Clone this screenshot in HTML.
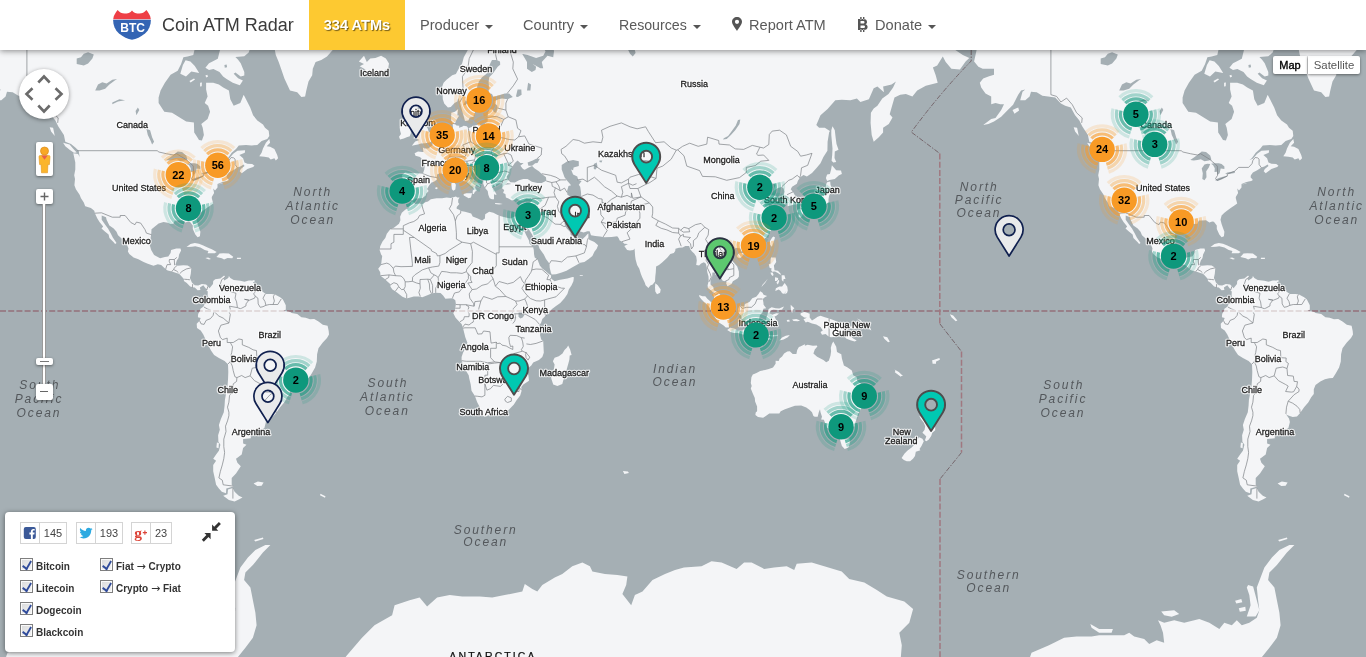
<!DOCTYPE html>
<html lang="en"><head><meta charset="utf-8"><title>Coin ATM Radar</title>
<style>
html,body{margin:0;padding:0;width:1366px;height:657px;overflow:hidden;background:#a5afb4;font-family:"Liberation Sans",sans-serif}
#map{position:absolute;left:0;top:0;width:1366px;height:657px;display:block}
.land{fill:#f4f5f7}
.water{fill:#a5afb4}
.border{fill:none;stroke:#7b8084;stroke-width:.7}
.dl{fill:none;stroke:#94707a;stroke-width:1.3;stroke-dasharray:6 2.2}
.cl{font:9px "Liberation Sans",sans-serif;letter-spacing:0;text-anchor:middle}
.halo{fill:#fff;stroke:#fff;stroke-width:2.6;stroke-linejoin:round;opacity:.8}
.ink{fill:#1c1c1c;stroke:#1c1c1c;stroke-width:.28}
.cn{font:bold 11px "Liberation Sans",sans-serif;fill:#000;text-anchor:middle}
.ol{font:italic 12px "Liberation Sans",sans-serif;fill:#54585c;letter-spacing:1.9px;text-anchor:middle}
#nav{position:absolute;left:0;top:0;width:1366px;height:50px;background:#fff;box-shadow:0 1px 6px rgba(0,0,0,.45);z-index:10}
#nav .brand{position:absolute;left:162px;top:0;line-height:51px;font-size:18px;color:#3b3b3b;white-space:nowrap}
#nav .cnt{position:absolute;left:309px;top:0;width:96px;height:50px;background:#fdc931;color:#fff;font-weight:bold;font-size:14.600px;line-height:50px;text-align:center;text-shadow:1px 1px 1px rgba(0,0,0,.55)}
#nav .it{position:absolute;top:0;line-height:50px;font-size:14.6px;color:#5a5a5a;white-space:nowrap}
.caret{display:inline-block;width:0;height:0;border-top:4px solid #555;border-left:4px solid transparent;border-right:4px solid transparent;vertical-align:middle;margin-left:6px;position:relative;top:1px}
.gm{position:absolute;background:#fff;box-shadow:0 1px 3px rgba(0,0,0,.45);border-radius:2px}
#panel{position:absolute;left:5px;top:512px;width:230px;height:140px;background:#fff;border-radius:4px;box-shadow:0 1px 5px rgba(0,0,0,.5);z-index:5}
#panel .sb{position:absolute;top:10px;height:22px;border:1px solid #d4d4d4;box-sizing:border-box;background:#fff}
#panel .sb i svg{margin-left:-1px}
#panel .sb i{font-style:normal;position:absolute;left:0;top:0;width:18px;height:20px;overflow:hidden;border-right:1px solid #d4d4d4;display:block}
#panel .sb span{position:absolute;left:19px;top:0;right:0;line-height:21px;text-align:center;font-size:11px;color:#444}
#panel .ck{position:absolute;width:13px;height:13px;border:1px solid #7f7f7f;background:linear-gradient(135deg,#d9dadb,#f4f4f4);box-sizing:border-box;box-shadow:inset 0 0 0 1px #fafafa}
#panel .ck:after{content:"";position:absolute;left:3.400px;top:-.5px;width:3.600px;height:8.200px;border:solid #2f4b9b;border-width:0 2.200px 2.200px 0;transform:rotate(38deg) skewX(8deg)}
#panel .ar{font:11px "DejaVu Sans",sans-serif;font-weight:normal;position:relative;top:-.5px}
#panel .lb{position:absolute;font-weight:bold;font-size:10px;color:#333;white-space:nowrap;line-height:12px}
</style></head><body>
<svg id="map" viewBox="0 0 1366 657" width="1366" height="657">
<defs><g id="world">
<path id="landp" class="land" d="M-49.9,61.4 -45.6,41.8 -35.6,32.3 -17.2,17.0 7.0,25.7 26.9,31.5 44.0,33.9 63.9,24.0 72.4,32.3 83.8,29.8 100.9,37.9 115.1,44.8 120.8,42.5 129.3,44.1 139.3,45.6 149.2,44.1 154.9,42.5 154.9,32.3 159.2,11.6 164.9,24.0 167.7,32.3 170.6,40.2 177.7,44.1 180.5,49.3 184.8,32.3 194.8,29.8 196.7,40.2 193.3,55.1 187.6,56.5 183.4,57.2 181.1,64.1 177.7,70.8 170.6,74.7 164.9,82.8 160.6,90.6 158.6,97.5 158.6,103.1 164.3,111.7 172.0,112.7 180.5,117.9 186.2,121.4 193.9,122.4 194.2,132.6 196.7,136.3 199.0,140.0 201.9,140.5 203.9,134.9 202.7,127.8 201.3,123.9 207.6,118.9 210.1,111.7 208.1,105.8 204.7,103.1 207.6,96.4 206.1,89.4 206.1,82.8 213.2,82.8 218.9,84.6 223.2,87.6 228.9,90.6 230.3,99.2 233.7,105.8 240.3,103.1 243.7,94.7 246.0,99.2 250.2,107.4 253.1,115.3 257.3,120.4 263.0,124.4 265.0,127.8 268.7,130.7 269.3,135.9 267.3,139.1 261.6,140.9 257.3,145.0 251.6,145.4 246.0,145.0 238.8,145.4 236.0,148.9 231.7,152.8 228.0,157.9 225.5,160.0 228.9,158.8 233.2,153.7 237.4,150.7 245.1,150.2 244.8,152.8 239.4,155.0 243.1,158.3 244.5,162.5 247.4,163.7 252.2,164.1 254.5,165.7 253.1,167.0 247.4,169.0 241.7,173.3 239.7,171.3 240.8,169.0 244.5,166.1 243.7,164.5 240.3,166.6 237.4,167.4 233.2,170.2 228.9,172.5 226.9,175.3 226.6,177.2 228.9,179.9 227.2,181.0 224.6,181.4 221.8,182.2 217.5,184.1 217.5,187.4 215.0,190.4 213.2,188.5 214.1,192.9 211.8,196.9 211.8,198.3 213.2,203.6 210.4,205.6 206.7,208.1 203.3,210.4 200.4,212.8 197.6,215.5 196.5,219.8 197.6,224.1 199.0,228.0 200.4,231.8 199.9,236.3 197.6,237.2 195.3,234.4 192.8,228.9 192.8,225.4 189.9,221.8 188.2,221.5 185.4,222.5 182.0,220.2 177.7,220.5 174.8,220.5 173.4,223.8 170.6,224.1 167.7,222.8 163.5,222.1 158.6,223.4 154.9,226.4 151.5,229.3 151.2,234.4 150.1,240.6 149.8,245.3 151.2,249.9 154.1,255.0 157.8,257.1 160.1,258.3 164.9,257.1 168.3,256.5 170.6,252.9 171.1,249.9 176.3,248.4 180.5,248.4 181.1,250.5 179.1,254.4 178.5,258.0 176.8,260.4 175.4,264.9 177.7,265.8 183.4,265.2 187.6,265.5 191.3,267.8 190.8,273.7 189.9,278.1 191.9,282.4 194.8,285.3 198.2,285.6 201.9,283.9 206.1,284.4 208.1,286.4 207.6,290.5 205.6,288.2 203.3,285.3 199.9,287.6 200.4,289.9 197.6,290.2 194.8,287.6 191.9,287.3 189.9,286.2 186.8,283.0 183.9,281.0 183.9,278.9 180.5,275.2 178.8,273.7 176.3,273.1 172.0,271.4 167.7,270.5 165.5,269.0 161.2,264.9 157.8,264.3 153.5,265.8 147.8,263.7 143.6,261.9 138.4,259.2 133.6,257.4 129.3,254.1 127.9,251.4 128.5,248.4 126.5,243.7 122.2,239.1 118.0,235.3 116.5,231.8 113.7,228.6 109.4,225.4 106.6,219.8 106.0,217.2 101.7,215.5 101.7,219.8 105.2,224.7 108.0,228.6 110.8,233.4 112.8,237.5 114.5,240.0 116.5,243.1 115.1,244.1 113.7,242.2 109.4,238.1 108.6,234.4 105.2,231.8 101.5,228.6 103.2,226.4 99.5,222.1 97.2,218.2 94.9,213.2 94.3,210.8 90.9,208.1 85.2,206.3 83.8,202.5 81.0,198.3 79.6,194.7 75.9,189.3 74.4,185.2 75.0,179.1 74.2,175.3 75.3,169.4 75.3,162.5 73.3,153.3 78.1,154.1 79.6,157.1 78.7,150.7 75.3,147.6 71.0,144.1 65.3,141.8 63.9,134.9 58.2,126.3 55.4,120.4 51.1,115.3 46.8,107.4 41.2,105.8 36.9,103.6 31.2,97.5 24.1,96.4 18.4,95.8 12.7,92.3 7.0,91.8 5.6,96.4 1.3,100.3 -3.8,100.3 -1.5,91.8 1.3,89.4 -2.9,90.6 -5.8,94.7 -8.6,100.3 -10.9,104.7 -17.2,111.1 -22.8,116.8 -30.0,121.4 -35.6,123.9 -40.8,124.9 -32.8,118.9 -28.5,117.9 -22.8,110.1 -20.0,104.2 -23.7,104.2 -28.5,103.1 -32.8,104.2 -32.8,96.4 -38.5,93.5 -42.8,87.6 -44.2,82.8 -40.8,78.5 -35.6,76.6 -30.0,74.7 -30.0,68.8 -35.6,68.8 -41.3,68.8 -45.6,66.8 -49.9,61.4Z M274.4,47.8 275.8,55.1 278.7,62.1 281.5,70.1 284.4,78.5 287.2,84.6 290.0,90.6 297.2,92.3 301.4,96.9 305.1,96.4 306.3,90.6 308.5,81.6 312.2,75.3 312.8,68.8 315.6,62.1 321.3,60.0 327.0,56.5 332.7,50.0 342.7,42.5 354.0,37.9 359.7,28.2 365.4,19.6 356.9,-19.4 314.2,-86.0 257.3,-86.0 228.9,-56.1 263.0,-25.0 271.6,28.2Z M259.3,156.2 261.6,152.8 263.0,148.5 265.9,142.7 269.3,139.1 270.1,142.7 266.7,146.3 270.1,146.7 274.4,148.9 275.8,152.0 277.2,155.0 278.1,158.3 275.8,160.4 274.4,158.3 270.7,159.6 268.7,157.5 264.4,156.7 259.3,156.2Z M63.1,142.7 69.6,144.5 73.0,148.5 76.7,152.4 73.9,152.8 69.6,149.8 65.3,146.3 63.1,142.7Z M186.5,247.1 190.5,244.1 194.8,243.1 199.0,243.7 203.3,245.6 207.6,247.4 211.8,249.3 216.7,252.0 214.7,253.2 207.6,253.2 208.4,251.1 204.7,249.9 200.4,247.4 195.3,246.2 191.9,246.8 186.5,247.1Z M216.4,257.1 219.5,253.5 223.2,253.2 228.9,253.5 233.2,256.8 232.3,258.3 227.5,258.0 224.1,259.5 221.8,258.3 216.4,257.1Z M205.3,258.0 208.1,257.4 211.0,258.9 209.0,259.5 205.3,258.0Z M236.9,257.7 241.1,257.7 240.8,258.9 236.9,258.9 236.9,257.7Z M358.9,61.4 364.0,55.8 366.8,62.1 370.3,58.6 375.4,57.9 381.1,55.8 385.9,58.6 389.0,63.5 388.2,68.2 383.9,70.8 376.8,75.3 371.1,74.7 364.0,72.7 365.4,69.5 359.7,66.2 364.0,64.1 358.9,61.4Z M49.7,127.3 53.1,127.8 54.8,135.9 51.1,131.6 49.7,127.3Z M-11.5,110.1 -5.8,107.4 -4.9,110.6 -9.5,113.8 -11.5,110.1Z M217.5,184.4 223.2,182.9 221.8,183.7 217.5,184.4Z M252.2,280.4 254.5,280.1 254.5,282.1 251.9,282.1 252.2,280.4Z M208.1,286.4 209.5,288.2 213.0,284.1 213.2,281.0 215.2,279.2 220.4,278.4 224.1,275.5 225.2,277.2 223.5,278.9 224.3,280.4 228.3,278.1 228.9,276.0 230.3,278.1 233.7,280.1 240.3,280.7 244.5,281.8 248.8,280.4 251.6,280.4 254.5,283.9 257.3,286.7 261.6,291.0 265.9,293.9 271.6,293.9 275.0,294.5 280.1,297.3 282.9,299.6 285.8,305.3 285.8,309.6 282.9,311.0 285.8,311.6 290.0,311.9 291.5,313.0 297.2,314.1 301.4,317.3 305.7,317.8 310.0,319.3 314.2,319.0 318.5,321.5 322.8,324.7 327.6,325.8 328.7,331.0 329.0,334.4 327.0,338.1 322.8,342.5 318.5,348.3 317.1,354.2 316.8,361.6 315.1,367.6 311.7,373.6 308.8,377.9 305.1,378.3 300.9,379.2 296.3,381.4 291.5,385.1 289.8,389.2 289.8,394.0 287.2,397.3 284.4,402.2 280.1,407.2 276.1,412.9 273.0,416.4 268.7,417.0 263.6,415.3 261.9,413.9 265.0,418.4 265.9,421.9 264.4,428.0 260.2,430.6 251.6,431.3 250.8,435.3 250.8,438.3 243.1,439.1 243.1,443.6 246.5,444.8 243.1,447.9 241.7,454.6 236.0,458.7 237.4,462.8 240.8,466.2 236.0,473.5 231.7,477.9 231.7,484.8 233.4,486.6 226.3,488.5 226.0,493.2 221.8,491.8 218.9,488.5 216.1,484.8 214.7,477.9 213.2,471.3 213.2,464.9 216.1,460.8 213.2,458.7 216.1,454.6 218.9,450.7 220.4,444.8 218.4,441.7 218.1,435.3 219.8,429.8 218.9,425.1 220.9,419.1 223.8,412.2 224.6,405.5 224.9,399.9 226.0,394.0 227.5,386.1 228.0,379.8 228.3,372.1 228.0,364.3 224.6,361.0 218.9,358.0 214.1,355.0 211.0,350.6 208.4,345.4 205.6,339.6 203.3,334.4 200.7,330.4 197.0,328.1 196.7,323.8 199.6,320.7 200.7,318.1 197.9,317.3 198.2,313.8 200.2,311.0 200.4,308.7 203.3,306.7 204.7,303.9 207.6,303.6 208.4,300.2 207.6,295.3 207.8,291.6 206.4,290.5Z M232.9,488.0 228.0,489.4 227.5,494.2 223.2,495.7 228.9,500.1 234.6,501.6 238.8,499.6 242.5,497.6 238.8,495.7 234.6,491.8 232.9,488.0Z M253.6,483.4 257.9,481.5 263.6,482.5 261.6,485.7 257.3,486.1 253.6,483.4Z M216.9,442.5 218.9,442.9 218.6,448.3 216.4,447.5 216.9,442.5Z M411.2,201.8 412.9,201.5 415.2,203.9 419.5,203.6 422.3,204.3 425.2,202.2 428.0,201.5 430.8,199.3 436.5,198.3 442.2,198.3 446.5,197.6 450.8,197.9 455.9,196.5 457.3,197.6 459.6,197.6 458.2,199.7 458.2,202.5 459.3,203.9 456.7,207.0 456.7,208.7 459.3,209.8 460.7,211.1 465.0,211.8 471.2,213.5 472.7,216.5 477.8,218.5 482.0,220.5 484.9,218.5 485.2,214.2 489.2,211.8 493.4,212.8 499.1,215.8 504.8,217.2 510.5,218.5 514.8,216.5 519.9,217.2 522.4,217.8 525.6,217.2 527.3,223.1 525.8,227.3 525.3,228.9 523.3,226.4 520.7,221.8 521.6,226.4 524.1,230.5 526.1,235.0 529.0,240.6 529.5,243.7 533.0,246.8 533.8,249.9 534.1,254.4 534.7,257.4 537.5,259.5 539.8,265.5 542.3,268.4 546.0,271.4 548.9,274.0 551.2,275.5 550.9,277.8 551.7,278.9 554.6,281.3 558.8,280.1 563.1,279.2 567.4,278.6 572.5,276.9 573.9,277.2 573.4,281.3 571.6,285.3 568.8,289.6 567.4,293.9 564.5,298.2 560.3,303.0 556.0,305.9 551.7,309.3 547.5,313.3 544.6,316.7 542.3,319.0 541.2,322.4 539.5,325.2 538.4,328.7 540.1,331.0 540.1,335.3 541.2,339.6 543.2,341.0 543.5,346.8 543.8,352.7 542.3,357.1 538.9,360.1 533.2,362.5 531.3,365.5 527.6,368.5 526.7,370.6 528.4,375.2 529.0,380.7 523.3,384.5 521.3,387.0 521.6,390.8 520.2,395.6 516.7,399.9 513.9,404.5 509.1,409.5 504.8,412.9 501.1,413.9 494.8,413.9 490.6,414.6 484.9,416.7 480.6,415.0 480.1,411.2 479.8,407.2 477.2,402.2 474.9,396.0 471.5,390.8 470.7,384.5 469.2,378.3 468.7,375.2 465.8,370.6 463.0,364.6 461.6,360.7 461.6,357.1 463.0,352.7 466.4,346.8 467.3,342.5 465.3,337.3 463.0,328.1 462.7,327.2 461.6,324.1 459.3,321.8 455.6,317.8 453.3,313.3 455.0,310.4 455.3,307.9 455.9,303.9 455.3,300.2 452.7,298.2 448.5,298.5 445.4,298.8 443.1,295.6 440.5,293.0 435.7,292.8 431.4,293.6 428.0,295.0 422.3,297.3 418.9,296.5 413.8,296.5 406.7,298.5 402.4,296.8 397.3,292.8 395.3,291.3 392.4,289.6 390.5,286.7 390.2,283.9 386.8,281.0 385.3,279.5 380.5,275.7 380.2,272.2 378.2,268.7 381.1,264.9 381.6,260.4 382.2,255.9 381.1,254.4 379.6,249.9 380.2,246.2 382.5,241.6 385.3,238.1 386.8,233.7 390.5,228.9 393.9,227.7 399.0,223.8 400.4,220.2 400.1,216.8 401.8,212.8 405.2,209.8 408.7,207.7 410.9,203.6 411.2,201.8Z M568.2,345.4 570.2,349.8 571.6,355.0 569.7,355.6 569.4,359.5 568.5,363.1 566.8,369.1 564.5,375.8 562.3,383.9 557.4,386.1 553.2,384.5 551.2,378.3 551.2,374.6 554.0,369.1 554.6,364.6 552.9,361.3 554.6,357.7 558.8,356.2 562.5,353.6 564.5,350.1 566.8,347.7 568.2,345.4Z M833.3,341.6 836.2,346.8 837.0,352.1 841.3,354.2 841.9,358.6 843.9,365.5 847.6,367.6 851.8,370.6 853.2,375.2 856.9,377.6 857.2,380.7 861.8,384.5 863.8,387.6 864.6,394.7 863.2,400.5 862.9,405.5 860.4,409.9 858.1,413.9 856.7,418.4 854.7,424.4 854.4,426.6 849.0,427.7 844.4,432.0 840.4,429.5 839.0,428.7 836.2,430.9 830.5,429.5 827.1,427.7 825.4,423.7 823.9,419.8 821.1,419.5 822.0,416.7 820.5,412.2 820.0,409.2 818.8,412.2 817.7,416.7 814.8,416.7 813.4,416.0 812.0,412.2 809.7,409.9 806.3,407.5 801.2,405.5 794.9,405.8 789.2,407.8 785.0,409.2 780.7,411.2 779.3,413.6 775.0,413.6 769.3,413.6 765.1,416.4 763.1,417.7 758.0,417.0 755.4,415.0 755.7,412.6 757.1,411.2 757.1,406.5 755.1,401.5 754.8,397.9 752.8,393.4 750.8,388.6 751.7,386.1 750.8,382.9 751.4,377.3 752.8,374.6 756.5,373.0 760.2,370.9 765.1,370.0 768.8,369.1 773.0,367.6 775.6,363.7 775.6,360.7 778.7,361.0 779.6,358.6 782.1,356.5 784.1,353.6 787.3,351.5 789.8,351.2 792.7,353.9 796.4,353.9 797.2,350.1 798.9,347.1 800.3,346.5 804.9,344.2 804.9,345.7 807.7,344.8 812.9,345.7 816.8,345.4 817.4,346.5 814.8,349.5 813.4,353.6 817.1,356.8 823.4,360.1 826.2,362.2 828.8,360.7 830.5,355.6 831.1,351.2 830.8,347.7 831.9,343.9 833.3,341.6Z M839.6,437.9 844.7,439.5 849.5,438.3 849.8,443.6 848.4,447.5 844.7,449.1 841.9,446.0 840.7,442.1 839.6,437.9Z M919.2,415.7 922.4,418.1 924.6,421.6 926.6,423.7 928.1,423.4 928.6,426.6 932.0,428.0 935.2,426.9 935.2,430.2 932.3,432.7 931.2,436.1 928.6,439.8 926.3,441.3 924.9,440.2 926.3,436.5 924.4,434.6 922.4,432.7 924.6,429.8 925.2,426.2 923.8,422.7 920.9,419.1 919.2,415.7Z M919.2,437.2 922.4,438.7 923.8,441.3 921.5,446.0 919.5,449.1 920.4,450.3 915.8,451.8 915.0,455.9 913.0,458.7 910.1,461.2 906.7,461.2 903.9,459.9 901.6,457.9 904.4,453.8 907.3,450.7 911.6,447.5 915.0,444.0 917.2,439.8 919.2,437.2Z M501.1,18.8 507.6,19.6 516.2,25.7 521.9,33.1 530.4,34.7 541.8,44.1 545.5,51.5 543.2,55.8 536.1,57.9 527.6,55.1 521.9,53.7 520.4,50.8 523.3,55.8 527.0,62.1 527.0,68.8 531.8,72.1 535.5,70.1 536.1,66.8 532.7,64.1 540.4,68.2 543.2,68.2 541.8,62.1 547.5,55.8 553.2,57.2 554.0,51.5 552.6,40.2 558.8,44.1 570.2,42.5 581.6,41.8 590.1,39.4 598.7,32.3 610.0,33.9 618.6,37.9 624.3,40.2 627.1,47.8 630.0,53.7 632.8,56.5 635.6,52.9 634.2,47.8 634.2,36.3 635.6,19.6 655.6,6.0 698.2,-30.8 740.9,-8.8 789.2,1.2 826.2,6.0 854.7,15.2 883.1,28.2 911.6,32.3 940.0,36.3 954.2,49.3 962.8,55.1 969.3,57.9 965.6,61.4 959.9,69.5 951.4,68.8 945.7,62.1 942.8,56.5 937.2,65.5 932.9,67.5 935.7,75.3 937.7,82.8 925.8,85.8 917.2,90.6 912.4,96.4 905.9,94.1 900.2,94.7 894.5,97.5 891.6,107.4 889.7,114.3 892.5,117.4 888.8,123.9 883.1,127.8 883.1,132.6 878.8,137.2 873.7,141.8 871.7,134.9 870.6,122.9 870.9,112.7 873.7,108.5 877.4,105.8 882.3,98.6 888.5,94.1 893.1,87.6 895.9,81.6 891.6,84.6 883.1,86.4 884.0,92.3 877.4,86.4 873.7,88.2 868.9,99.2 860.4,102.0 856.9,98.6 850.4,100.3 841.9,99.8 835.3,100.3 827.6,109.0 820.5,115.3 816.3,124.9 819.1,127.8 824.8,127.8 829.9,131.1 829.1,132.6 827.6,141.8 827.4,150.7 823.4,157.1 820.5,163.3 816.3,168.2 812.0,172.9 806.9,176.4 803.5,174.9 800.1,177.2 797.8,181.0 796.9,183.7 792.1,186.7 790.7,189.3 793.2,192.2 796.1,197.6 796.4,202.9 794.9,204.3 790.7,205.6 787.5,206.3 787.8,201.8 788.4,197.6 783.6,194.7 784.4,191.8 783.6,188.5 781.8,187.0 777.9,188.1 773.6,191.1 774.2,188.5 775.6,184.8 772.2,183.3 767.9,187.4 763.6,189.6 762.8,192.2 766.2,195.8 767.9,197.2 771.6,194.7 776.4,196.1 776.2,197.9 771.3,200.1 767.3,204.3 770.2,207.0 771.9,212.1 774.5,215.2 774.7,218.2 772.2,220.5 775.0,221.5 773.9,226.4 771.6,228.9 768.8,233.7 766.5,236.9 763.6,239.4 760.2,242.8 755.1,244.7 752.8,245.9 749.4,246.8 746.0,248.1 742.3,249.3 741.7,252.0 740.3,248.4 736.6,247.7 732.4,249.9 731.2,252.3 728.9,255.3 730.9,259.5 734.1,263.1 737.2,266.4 738.9,271.4 738.9,276.6 737.5,278.6 732.9,281.3 731.5,283.9 727.5,286.2 726.1,283.3 726.7,281.5 722.7,280.7 721.0,278.1 719.0,276.0 715.3,274.6 715.0,272.5 712.4,272.5 712.2,276.6 710.5,280.1 710.5,284.4 713.3,287.0 713.9,290.2 717.3,291.9 719.0,293.3 722.1,297.3 722.4,302.5 724.4,306.7 723.3,307.3 719.6,305.0 716.4,302.7 714.4,299.6 713.6,295.3 713.0,292.5 711.0,290.2 707.9,287.9 707.6,285.3 708.7,281.0 708.5,276.6 707.3,272.2 706.8,267.8 705.9,263.7 703.9,262.2 701.1,263.4 699.1,265.5 696.2,264.9 696.8,260.4 696.2,256.5 694.2,253.5 692.0,251.4 690.3,249.3 689.1,245.9 685.4,245.9 682.6,247.4 678.9,247.7 675.5,248.7 675.2,251.1 673.8,252.9 670.3,254.1 667.2,257.7 662.1,262.5 659.0,264.9 656.1,266.4 655.8,272.2 655.3,276.6 655.0,281.5 652.7,284.4 650.4,285.6 648.4,287.9 645.6,285.3 644.7,282.4 642.2,277.2 640.8,273.7 639.3,268.7 637.1,264.9 635.6,259.5 635.1,255.9 634.8,251.4 634.5,248.4 633.4,249.9 630.0,250.5 627.1,249.9 624.3,245.9 628.0,244.1 624.3,243.7 622.0,241.6 619.7,240.6 618.6,238.1 617.2,236.3 611.5,236.9 604.4,237.2 600.1,236.6 595.3,235.9 591.0,235.3 589.6,231.2 587.3,231.2 583.6,232.5 579.6,231.2 574.5,228.3 572.5,224.7 570.2,220.8 567.4,220.2 566.0,221.5 564.5,223.1 565.1,225.4 566.8,228.6 570.2,232.1 570.8,235.3 572.5,235.9 573.6,234.1 574.8,237.5 574.2,239.4 577.3,240.0 581.6,240.0 585.3,236.6 587.6,234.1 588.4,233.4 588.4,237.5 589.3,239.7 594.4,241.9 598.1,245.3 596.7,248.7 594.4,251.7 592.4,255.9 588.7,258.9 584.4,261.9 580.2,262.8 576.5,264.9 571.6,267.8 566.5,270.8 561.7,272.5 556.0,274.3 551.7,274.6 550.9,272.8 549.7,267.8 549.5,263.7 546.0,258.9 543.8,254.4 539.5,248.4 537.5,242.2 534.1,239.1 532.1,234.4 529.0,229.6 527.0,228.0 527.6,223.1 525.6,217.2 526.1,216.5 527.3,213.2 527.8,210.8 529.8,206.3 530.4,201.8 531.0,198.3 529.0,199.0 526.1,198.6 523.3,200.8 520.4,200.8 516.2,198.3 514.8,199.7 511.9,200.4 508.5,198.6 505.9,197.6 505.4,194.0 503.1,192.9 504.2,190.0 502.2,188.5 502.5,186.3 502.5,184.4 502.0,183.3 499.1,183.3 496.3,184.1 495.7,186.7 493.1,184.8 492.3,187.4 494.3,190.4 496.3,194.0 496.3,195.1 494.0,194.3 494.0,199.3 492.0,199.3 489.7,198.3 488.3,194.7 487.7,191.1 484.9,187.8 483.2,183.7 483.5,179.9 480.6,177.2 477.2,174.9 473.2,172.5 470.7,168.6 468.7,166.1 466.7,167.4 467.0,164.5 463.3,165.7 463.0,169.0 463.8,171.3 466.7,173.3 468.4,177.2 471.2,179.5 474.1,179.5 473.5,181.4 476.4,182.5 479.2,184.4 480.6,186.3 479.5,187.0 476.6,184.8 475.2,186.3 475.2,188.1 476.9,190.4 474.9,191.8 473.8,194.0 472.7,194.0 472.7,190.7 474.1,189.3 472.7,186.7 470.7,185.5 469.0,184.1 467.0,182.2 463.6,180.7 461.0,177.6 457.9,175.7 457.3,172.9 455.9,171.0 453.3,169.8 451.0,171.7 449.3,172.1 446.8,174.5 443.1,174.1 439.7,173.3 437.1,174.5 436.8,177.6 437.1,179.5 434.3,181.4 430.6,182.9 428.6,186.3 427.1,188.9 428.6,191.1 426.3,193.6 425.7,195.4 422.6,197.9 420.9,198.3 415.5,198.6 412.9,200.8 410.4,199.3 409.8,197.9 407.0,196.9 402.7,197.6 403.0,192.5 401.3,191.1 402.7,185.9 403.3,182.2 402.7,178.4 401.8,174.9 405.2,172.5 408.1,172.9 412.4,172.9 417.2,173.3 422.9,173.7 424.3,169.4 424.9,164.9 424.6,162.5 421.7,158.8 420.0,157.1 415.5,155.8 414.6,153.3 418.0,151.5 422.3,152.0 423.4,152.0 422.9,147.6 424.6,148.5 428.3,148.5 432.3,145.4 432.8,142.3 435.1,141.4 438.0,139.5 439.9,136.3 441.7,132.6 443.6,131.1 447.9,130.2 451.3,129.7 453.0,127.8 452.5,122.9 451.0,119.9 451.3,112.7 455.0,111.7 458.2,109.0 457.6,112.7 457.3,115.3 459.0,115.8 457.0,118.9 455.6,121.4 455.3,123.9 456.4,125.4 459.3,125.8 459.0,127.8 462.1,126.8 463.6,125.8 466.7,126.3 468.4,128.3 473.5,126.3 479.2,123.9 480.9,125.8 484.0,125.8 484.9,123.4 487.7,121.4 487.7,116.8 488.0,112.7 489.7,109.6 492.3,109.0 494.0,112.2 496.3,112.7 497.4,108.0 497.4,105.8 494.8,103.6 494.8,100.9 498.5,99.2 502.0,98.6 507.6,99.2 512.8,96.9 509.1,93.5 504.8,93.5 499.1,95.2 493.4,96.9 492.0,94.1 488.6,92.9 488.9,85.2 488.6,82.2 489.2,77.2 492.9,73.4 497.7,66.8 500.2,64.8 500.0,61.4 496.8,60.0 492.0,60.0 490.6,62.8 488.6,67.5 489.2,70.1 486.3,74.0 482.0,77.2 478.9,81.6 477.2,86.4 476.9,92.3 480.6,95.8 481.8,97.5 479.8,100.3 477.8,103.6 475.5,107.4 474.9,112.7 473.5,116.8 469.8,117.4 468.4,120.4 465.0,120.9 464.1,117.4 462.7,112.7 461.3,107.4 459.9,102.0 458.2,98.1 457.3,101.4 454.5,103.1 450.8,106.9 447.9,107.4 444.2,103.6 442.8,99.2 442.5,93.5 442.2,86.4 443.6,82.8 446.5,79.7 452.2,75.3 455.9,74.0 458.7,68.8 462.1,63.5 463.8,57.2 467.8,50.0 470.7,44.1 476.4,36.3 482.0,29.8 490.6,24.0 501.1,18.8Z M413.2,104.2 419.5,104.2 416.9,109.0 422.3,109.0 422.9,110.6 420.9,115.8 418.9,117.9 422.3,118.9 423.7,122.9 425.2,125.4 427.4,127.8 428.9,132.1 432.6,133.5 432.8,135.9 430.8,138.2 432.0,140.5 430.3,142.3 425.2,143.2 420.9,143.6 418.0,144.5 415.2,145.0 411.8,145.8 415.2,141.4 419.5,140.0 417.2,139.1 413.2,138.2 415.8,134.9 416.1,132.6 414.9,130.7 419.2,130.7 419.5,127.8 418.0,125.4 418.3,123.4 414.1,123.9 414.3,118.9 411.8,120.9 412.4,115.3 410.4,112.7 411.8,109.0 413.2,104.2Z M407.0,121.4 410.4,121.9 412.4,124.9 410.6,128.8 410.9,133.0 409.8,136.3 406.7,137.2 403.8,138.6 400.1,139.5 399.0,136.8 401.0,134.0 400.1,130.7 399.6,126.8 403.8,125.4 404.4,122.4 407.0,121.4Z M463.6,194.0 466.4,193.3 472.1,193.3 471.0,197.6 468.7,198.3 463.8,195.4 463.6,194.0Z M451.3,183.3 454.2,182.2 455.9,184.8 455.3,189.6 453.3,190.7 451.9,189.3 451.3,183.3Z M452.5,177.6 454.7,175.3 455.0,179.1 454.2,181.4 452.7,180.3 452.5,177.6Z M495.1,202.9 499.1,203.2 502.8,203.9 499.1,204.6 495.1,203.9 495.1,202.9Z M519.9,204.6 521.9,203.6 526.1,202.5 524.4,204.6 521.9,206.0 519.9,204.6Z M434.8,188.1 437.1,187.0 437.7,188.5 436.2,189.3 434.8,188.1Z M655.3,283.3 657.8,285.3 660.7,289.6 660.1,292.8 657.0,294.2 655.3,291.6 655.0,287.6 655.3,283.3Z M830.2,181.4 830.5,184.8 831.9,188.5 830.5,192.9 829.1,195.8 828.5,199.3 828.5,202.2 826.2,204.3 825.7,202.9 823.9,203.9 822.8,205.6 820.0,205.6 817.7,206.0 817.1,207.0 814.8,209.8 812.6,208.4 812.9,206.0 810.0,206.0 806.3,207.0 804.0,208.4 800.6,208.1 800.6,206.3 804.9,203.2 809.2,202.5 813.4,202.2 814.8,200.1 817.1,197.9 818.5,195.8 822.0,196.1 824.8,192.9 826.2,188.5 825.9,184.8 827.1,182.2 830.2,181.4Z M827.1,181.0 829.6,179.9 834.8,179.1 839.0,175.3 841.9,174.1 841.0,170.6 836.2,170.2 831.9,165.3 831.1,169.4 829.9,174.1 827.1,174.5 825.9,178.0 827.1,181.0Z M800.3,208.4 802.6,209.8 803.2,212.5 801.8,216.5 799.8,217.8 798.3,216.5 799.2,213.2 797.2,212.1 797.2,209.8 800.3,208.4Z M804.9,209.1 809.7,207.0 811.1,208.7 809.7,210.4 806.9,211.5 804.9,209.1Z M832.5,126.3 834.8,130.2 835.6,137.2 836.5,144.1 838.5,149.8 834.8,151.5 834.5,157.9 836.2,162.1 833.3,162.5 831.6,160.8 832.2,155.0 832.5,148.5 831.9,141.8 831.3,134.9 831.3,130.2 832.5,126.3Z M773.6,236.6 775.0,237.5 773.6,242.2 771.9,246.8 769.9,244.7 769.9,241.3 772.2,237.5 773.6,236.6Z M737.2,255.3 739.5,252.9 743.2,252.9 743.7,254.1 741.7,257.1 739.5,258.3 737.2,257.1 737.2,255.3Z M771.0,257.4 775.6,257.4 776.2,261.9 773.9,265.5 774.5,270.2 777.9,270.8 780.7,273.7 780.7,274.9 777.9,273.1 775.0,271.4 772.2,271.7 771.0,269.9 771.9,268.7 769.6,267.8 768.8,264.3 770.5,263.4 770.5,260.4 771.0,257.4Z M784.7,283.0 787.3,286.7 787.8,290.5 787.0,293.0 785.0,293.9 785.5,291.0 784.4,293.9 782.1,293.3 780.7,291.0 778.7,289.6 775.3,291.0 775.9,288.2 779.3,286.4 782.1,286.4 784.7,283.0Z M775.0,277.2 778.2,278.1 777.9,280.1 776.4,281.0 775.0,281.0 775.0,277.2Z M781.6,275.2 784.4,275.2 785.5,278.9 783.6,278.9 783.3,281.8 781.8,280.1 781.6,275.2Z M778.4,279.8 779.3,281.0 777.9,284.4 776.4,282.7 778.4,279.8Z M767.9,278.6 765.1,283.0 761.4,287.0 762.5,284.7 765.9,281.0 767.9,278.6Z M770.5,272.5 772.7,272.5 773.6,274.9 772.5,276.0 771.0,274.3 770.5,272.5Z M739.8,305.3 741.7,306.2 744.3,306.7 744.9,303.9 749.4,301.9 752.3,298.2 756.2,296.8 758.5,293.9 760.2,291.3 762.5,292.8 763.6,294.8 767.1,295.9 764.8,297.3 762.8,299.0 763.4,302.5 763.6,304.7 766.2,308.2 763.4,308.7 762.2,312.7 759.9,315.3 759.1,319.0 758.0,321.5 754.3,322.7 750.8,320.4 746.6,320.7 741.7,319.3 740.9,315.3 738.3,312.4 738.0,309.0 739.8,305.3Z M699.1,295.0 702.5,296.2 705.3,296.2 707.3,298.8 711.0,301.9 713.9,304.7 716.7,306.2 720.4,308.7 723.0,311.0 723.3,313.8 725.2,316.4 729.5,319.5 729.2,323.8 728.9,327.5 725.8,327.5 723.3,325.2 719.0,322.4 715.9,318.7 713.9,315.3 711.9,311.6 709.3,307.3 707.3,304.7 704.5,302.5 701.6,299.6 699.4,296.8 699.1,295.0Z M727.2,330.1 730.1,327.8 734.6,328.7 737.5,330.4 742.3,330.7 743.7,329.2 748.3,330.7 749.4,332.7 753.7,333.0 753.7,335.8 749.4,334.7 743.7,334.7 738.0,333.0 733.8,333.0 730.4,332.1 727.2,330.1Z M768.8,309.0 771.6,307.3 775.6,308.2 779.3,308.4 782.1,307.3 784.1,306.4 782.1,309.6 778.7,309.9 773.6,309.6 770.2,310.4 769.3,313.3 772.2,314.7 776.4,313.3 779.0,313.6 776.4,315.8 774.5,316.4 776.2,320.1 778.4,323.0 777.0,324.1 775.3,324.4 773.9,322.7 772.2,319.0 770.8,319.3 770.5,321.8 770.8,326.7 767.9,326.7 767.9,322.4 766.2,320.4 766.2,318.1 767.3,315.3 768.8,309.0Z M800.6,313.3 804.3,312.1 807.7,313.0 809.7,313.8 809.7,317.5 812.0,320.4 814.8,318.7 817.7,316.7 820.5,315.8 824.8,317.3 829.1,318.4 833.3,320.1 837.6,321.8 840.4,323.8 842.7,326.1 846.1,327.8 848.4,329.8 846.7,331.0 847.6,333.3 850.4,336.1 853.2,338.4 856.7,340.5 854.7,341.6 850.4,340.2 846.1,338.4 843.3,334.4 839.9,333.0 837.0,334.1 835.3,336.7 831.9,337.3 829.1,337.0 825.7,334.1 822.0,334.7 820.5,332.1 822.8,330.4 820.5,327.0 816.3,324.4 812.0,323.5 807.7,321.8 805.7,322.4 803.5,319.3 806.9,317.8 804.3,317.5 800.6,315.0 800.6,313.3Z M779.3,340.5 782.1,337.6 785.8,335.8 789.8,335.0 787.8,337.3 783.6,339.6 779.3,340.5Z M769.0,335.3 773.6,335.3 777.9,334.7 777.3,336.1 772.2,336.4 769.0,336.1 769.0,335.3Z M760.2,335.0 763.6,334.4 766.5,335.3 765.1,336.4 760.8,336.7 760.2,335.0Z M754.0,334.4 756.8,334.4 759.7,334.7 759.4,336.4 756.5,336.1 754.0,335.0 754.0,334.4Z M766.5,338.1 770.2,338.1 771.6,340.2 768.2,339.6 766.5,338.1Z M790.7,304.7 792.7,306.7 794.4,308.2 792.9,309.6 792.1,313.0 791.0,310.1 790.7,307.6 790.7,304.7Z M792.1,319.5 796.4,319.0 800.1,320.4 797.8,321.2 793.5,321.0 792.1,319.5Z M786.7,320.1 789.2,319.8 789.8,321.5 787.3,321.8 786.7,320.1Z M849.8,327.0 854.7,325.2 858.9,323.0 861.2,323.2 860.4,326.1 856.1,328.7 851.8,328.7 849.8,327.0Z M856.9,318.4 860.4,320.1 863.2,323.2 862.3,323.5 858.9,320.1 856.9,318.4Z M867.8,326.1 870.3,328.1 871.4,330.4 869.5,329.5 867.8,326.1Z M894.5,369.4 898.8,372.1 903.0,376.1 901.0,376.1 897.3,373.6 894.5,369.4Z M932.3,361.6 936.0,361.6 936.0,363.7 932.6,363.7 932.3,361.6Z M579.6,274.9 583.0,274.9 582.5,275.7 579.9,275.7 579.6,274.9Z M5.0,660.2 7.5,652.7 25.0,645.2 40.1,637.7 52.6,636.5 67.6,636.5 75.1,635.2 87.6,635.2 100.2,635.2 105.2,632.7 110.2,636.5 120.2,639.0 125.2,644.0 132.7,640.2 140.2,642.7 139.0,632.7 136.5,625.2 134.0,620.2 140.2,622.7 150.2,620.2 160.2,622.7 175.3,618.9 185.3,622.7 195.3,628.9 200.3,622.7 207.8,625.2 212.8,620.2 217.8,625.2 225.3,622.7 232.8,617.7 235.4,610.2 234.1,600.2 232.8,587.6 236.6,577.6 240.4,567.6 247.9,557.6 255.4,550.1 265.4,545.1 270.4,545.1 262.9,552.6 252.9,565.1 245.4,572.6 244.1,580.1 250.4,587.6 252.9,600.2 255.4,612.7 256.6,625.2 252.9,637.7 245.4,647.7 235.4,660.2 225.3,675.3 332.0,675.3 347.0,655.2 362.0,637.7 374.5,625.2 392.1,615.2 394.6,605.2 402.1,602.7 409.6,600.2 419.6,597.6 427.1,606.4 437.1,597.6 449.7,595.1 462.2,596.4 479.7,596.4 492.2,597.6 504.7,595.1 522.3,591.4 524.8,583.9 532.3,588.9 537.3,591.4 542.3,585.1 554.8,577.6 562.3,573.9 572.3,566.3 582.4,562.6 589.9,566.3 592.4,571.4 604.9,573.9 617.4,575.1 627.4,576.4 626.2,585.1 622.4,593.9 631.2,605.2 634.9,595.1 642.5,591.4 652.5,580.1 665.0,573.9 675.0,570.1 684.0,567.6 684.0,567.6 701.5,566.3 711.5,561.3 721.6,562.6 736.6,568.9 744.1,562.6 751.6,562.6 764.1,568.9 774.1,567.6 786.7,566.3 794.2,570.1 796.7,563.8 811.7,562.6 824.2,566.3 841.7,571.4 849.2,578.9 864.3,582.6 876.8,590.1 886.8,596.4 904.3,601.4 913.1,608.9 909.3,622.7 899.3,632.7 901.8,645.2 900.6,660.2 896.8,675.3 L1029.0,660.2 L1029.0,720 L5.0,720 Z M224.1,585.1 229.1,586.4 232.8,600.2 235.4,610.2 231.6,616.4 222.8,616.4 226.6,605.2 225.3,595.1 222.8,587.6Z M211.1,600.7 217.3,599.1 218.3,602.2 212.3,603.4Z M214.8,608.2 221.3,606.7 221.8,610.7 215.8,611.7Z M137.2,611.4 150.2,610.2 155.2,613.9 147.7,616.7 140.2,615.2Z M66.3,623.9 75.1,628.9 88.9,628.9 87.6,632.7 75.1,632.7 67.6,627.7Z M254.1,540.1 262.9,537.6 263.4,539.1 255.4,541.6Z M320.5,493.7 325.5,496.2 325.0,497.7 320.0,495.2Z M949.9,314.2 953.2,315.4 957.4,320.4 955.7,321.2 951.4,317.2Z M883.0,336.2 887.3,337.2 889.8,341.7 888.1,342.2 884.3,338.7Z M931.9,360.5 939.4,358.0 939.9,359.7 933.1,363.0Z M895.6,370.5 901.8,375.5 900.8,376.7 894.8,372.2Z M622.9,471.1 627.9,471.6 628.9,473.1 624.4,474.1Z M221.3,44.7 217.8,58.8 212.5,61.5 209.0,63.2 205.4,67.7 209.0,69.9 213.4,69.0 219.5,72.1 223.1,76.5 226.6,79.1 232.8,82.7 239.8,85.3 242.9,80.5 238.1,78.2 233.7,73.8 235.4,72.5 240.7,76.5 244.3,75.6 244.3,72.1 240.7,63.2 238.1,59.7 235.4,57.1 244.3,56.2 248.7,52.6 251.3,44.7Z M185.6,60.2 182.9,65.0 180.3,73.8 186.0,76.5 191.3,71.6 199.2,73.1 194.8,65.9 190.4,61.5Z M189.4,80.9 194.0,78.4 195.0,79.6 190.6,82.5Z M200.1,82.8 201.9,82.5 201.7,86.2 200.1,86.4Z M224.4,65.0 226.6,64.6 227.1,67.2 224.8,67.7Z M205.4,75.6 207.2,74.7 208.1,76.5 206.3,77.4Z"/>
<path class="water" d="M510.5,182.2 507.6,179.5 506.8,176.4 509.1,173.3 509.6,169.4 512.5,166.6 514.8,162.9 517.6,160.4 520.4,162.9 523.6,162.9 520.4,165.7 523.0,169.0 524.7,169.8 528.7,167.4 532.1,166.1 534.7,168.6 538.9,171.3 541.8,174.1 546.0,177.2 546.3,180.7 541.8,182.9 537.5,182.9 531.8,181.8 527.6,179.1 523.3,179.1 519.0,180.3 514.8,182.5 510.5,182.2Z M527.6,162.5 528.4,165.7 532.1,165.7 535.2,163.3 537.5,162.9 539.8,158.8 536.1,158.8 532.7,160.4 527.6,162.5Z M504.8,184.8 511.3,184.1 507.6,182.9 504.8,184.8Z M561.7,164.9 567.4,161.2 573.1,160.0 578.8,161.2 578.8,166.1 573.6,167.4 573.1,170.2 571.1,169.4 573.1,174.5 577.3,176.4 578.2,179.9 581.6,181.0 578.8,184.8 580.2,186.7 581.0,192.2 581.3,197.6 575.9,198.6 571.1,196.9 567.4,194.7 567.1,191.1 568.5,185.9 571.1,185.2 567.4,181.0 564.5,177.2 563.1,173.3 561.7,169.4 561.7,164.9Z M593.8,164.1 596.7,162.5 597.5,166.6 595.5,169.4 593.8,169.0 593.8,164.1Z M599.5,160.4 602.4,160.4 601.5,162.5 599.5,162.1 599.5,160.4Z M723.0,139.5 726.7,139.1 730.9,134.9 735.2,130.2 739.5,123.9 740.3,119.4 738.0,119.9 735.8,125.4 731.8,131.1 728.1,135.9 723.8,138.2 723.0,139.5Z M637.1,165.3 639.9,160.8 645.6,160.0 652.7,161.2 651.3,162.5 645.6,161.7 641.3,163.3 638.5,167.8 637.1,165.3Z M515.9,96.4 517.6,89.4 521.3,89.4 521.6,94.7 517.9,96.9 515.9,96.4Z M527.0,90.6 528.1,82.8 531.0,84.6 530.4,90.6 527.0,90.6Z M463.3,104.7 465.8,100.3 467.8,102.5 465.5,105.3 463.3,104.7Z M166.3,160.0 170.6,157.1 174.8,154.1 177.7,151.5 182.0,152.0 186.2,155.4 187.4,159.6 184.8,160.4 180.5,161.2 176.8,159.2 173.4,160.0 169.7,160.4 166.3,160.0Z M178.3,179.1 180.5,180.3 182.5,177.2 182.2,171.3 184.8,167.4 186.2,164.1 183.4,163.7 180.5,164.5 177.7,168.6 178.8,173.3 178.3,179.1Z M187.1,163.7 190.5,163.3 194.8,163.3 197.6,164.1 200.4,166.6 200.4,169.0 196.7,168.6 195.6,173.3 193.3,174.9 193.0,171.7 190.5,172.1 190.8,168.2 189.1,165.3 187.1,163.7Z M190.8,179.9 193.3,181.0 197.6,179.5 203.3,176.4 203.3,175.7 199.0,176.8 194.8,178.0 190.8,179.9Z M201.0,174.1 206.1,173.7 210.7,172.9 211.0,171.0 207.6,171.7 203.3,172.5 201.0,174.1Z M152.1,144.5 154.1,141.8 152.1,137.2 150.1,130.2 146.4,128.8 147.8,134.9 150.7,140.9 152.1,144.5Z M95.2,90.6 99.5,90.6 105.2,88.8 109.4,84.6 115.1,80.3 117.1,79.1 112.3,79.7 106.6,83.4 102.3,82.2 98.0,84.6 95.2,90.6Z M76.7,64.1 83.8,65.5 88.1,63.5 92.4,58.6 93.8,54.4 88.1,52.2 83.8,53.7 81.0,57.2 76.7,58.6 76.7,64.1Z M112.3,104.2 118.0,101.4 125.1,100.3 119.4,99.2 112.3,102.5 112.3,104.2Z M136.4,115.3 139.3,110.1 137.9,107.4 135.6,111.1 136.4,115.3Z M518.5,313.3 519.0,310.4 523.3,309.9 525.3,311.9 524.7,314.4 522.7,317.5 520.4,318.4 518.5,316.7 518.5,313.3Z"/>
<path class="border" d="M77.3,150.7 157.2,150.7 158.9,152.0 166.3,153.7 173.4,155.0 176.6,153.7 186.8,160.0 187.6,161.2 190.5,163.3 193.3,166.1 193.6,175.3 191.6,178.4 193.3,180.3 203.3,176.0 203.3,174.1 210.4,171.3 214.7,167.4 224.6,167.4 228.0,163.7 228.9,160.4 231.2,157.5 233.7,157.9 235.1,159.2 235.1,164.5 237.4,167.8 M26.9,31.5 26.9,94.7 32.6,96.4 36.9,102.0 42.6,98.1 48.3,104.7 52.5,112.7 58.2,117.9 57.7,122.9 M94.9,213.2 101.5,212.8 112.3,217.2 120.2,217.2 120.2,215.5 125.1,215.5 130.8,222.5 135.0,224.7 136.4,222.1 140.7,223.1 145.0,229.6 146.4,233.1 151.5,234.7 M165.7,269.3 166.3,267.0 167.2,264.6 170.6,264.6 169.2,261.3 169.4,259.5 174.3,259.5 174.6,265.2 M174.3,259.5 176.8,257.4 M171.7,271.4 173.7,269.6 174.3,267.8 176.8,265.8 M173.7,269.6 176.3,270.8 178.3,272.5 M179.7,273.7 182.0,271.4 186.2,269.0 191.3,267.8 M184.2,279.2 187.6,279.5 189.9,279.8 M192.2,287.9 192.8,283.9 M207.8,286.4 206.7,290.2 M225.2,277.2 221.8,279.5 220.4,283.9 222.3,287.6 223.2,290.5 228.9,291.0 236.0,293.3 235.1,298.2 236.6,301.9 237.4,307.6 M237.4,307.6 229.5,306.2 230.3,309.3 228.9,311.6 230.3,314.4 228.9,323.0 M228.9,323.0 223.2,318.1 218.9,316.1 213.8,311.3 M213.8,311.3 210.4,310.1 207.6,309.0 203.9,307.0 M213.8,311.3 213.2,315.3 210.4,318.7 206.1,320.4 204.1,324.4 201.0,323.8 199.6,320.7 M228.9,323.0 220.9,325.2 218.4,331.0 220.4,337.6 222.6,339.6 227.2,338.1 227.2,342.5 230.3,342.5 M230.3,342.5 232.6,346.8 231.7,352.7 230.9,355.6 231.7,358.6 230.3,361.6 228.0,364.0 M230.3,361.6 232.3,366.1 233.2,370.6 234.9,376.7 236.9,377.6 M230.3,342.5 233.2,342.5 238.8,339.0 242.3,339.6 242.3,344.8 248.8,347.4 253.1,349.8 256.5,350.6 256.8,357.7 262.2,358.0 261.9,361.6 264.4,363.4 263.0,368.5 M263.0,368.5 258.8,367.0 252.2,368.2 250.2,375.8 245.1,377.6 241.7,375.5 236.9,377.6 M236.9,377.6 236.6,381.4 233.2,383.9 233.2,390.8 229.5,395.6 228.9,402.2 227.5,407.2 228.9,412.2 228.9,415.7 227.5,420.9 225.5,426.2 226.0,431.6 223.8,439.1 223.8,446.7 224.6,452.6 223.8,458.7 222.3,464.9 220.4,471.3 218.9,477.9 222.3,480.2 223.2,484.8 233.2,486.1 M232.9,488.0 232.9,498.6 M263.0,368.5 263.6,375.5 269.3,376.1 270.1,381.4 273.5,381.7 272.7,386.4 M250.2,375.8 254.5,380.7 261.6,384.5 264.2,386.1 261.6,391.5 267.3,392.1 269.6,391.8 272.7,386.4 M272.7,386.4 275.0,389.2 275.0,391.5 270.1,394.7 264.2,401.2 M264.2,401.2 268.7,403.2 273.0,406.2 275.8,409.5 276.1,412.9 M264.2,401.2 262.5,407.2 261.9,413.9 M237.4,307.6 240.3,308.7 241.7,308.2 246.0,305.9 246.0,303.9 248.8,300.2 244.5,299.3 249.4,300.2 254.5,298.2 255.3,296.2 M255.3,296.2 253.6,293.9 255.9,291.0 257.3,286.7 M255.3,296.2 257.9,298.2 258.2,303.9 260.2,307.3 263.0,306.7 265.9,305.3 M265.9,305.3 265.0,301.6 263.0,298.2 265.3,293.9 M265.9,305.3 269.3,304.5 273.0,304.5 M273.0,304.5 274.4,301.0 273.3,296.8 274.4,294.5 M273.0,304.5 277.8,304.5 281.2,299.0 M421.7,204.3 423.2,209.8 424.6,213.8 419.5,215.5 417.8,218.8 413.8,221.5 409.5,222.8 403.3,225.7 403.3,230.2 M403.3,228.9 390.5,228.9 M403.3,230.2 403.3,234.4 393.9,234.4 393.9,242.2 391.0,243.7 391.0,249.0 379.6,249.0 M403.3,230.2 414.3,237.5 M414.3,237.5 409.5,237.5 412.4,263.4 412.4,266.4 401.0,266.7 395.3,266.1 393.3,268.4 M393.3,268.4 389.6,264.3 386.8,263.1 381.1,264.6 M414.3,237.5 431.4,249.6 431.4,250.8 436.5,253.5 437.4,255.9 439.9,255.6 M439.9,255.6 445.1,253.5 449.3,250.2 462.1,242.2 M462.1,242.2 456.4,239.1 456.4,232.8 455.9,227.0 455.3,220.8 M455.3,220.8 453.6,214.8 449.3,208.7 451.6,204.6 452.5,197.9 M455.3,220.8 457.3,215.8 460.7,213.2 460.7,211.1 M499.1,215.8 499.1,246.8 499.1,252.9 496.3,252.9 496.3,254.4 M496.3,254.4 473.5,242.2 470.7,243.7 462.1,242.2 M499.1,246.8 533.0,246.8 M470.7,243.7 472.4,251.4 472.1,262.5 466.7,269.3 466.4,271.7 M439.9,255.6 439.9,262.5 438.8,266.1 432.3,267.0 428.6,267.8 M466.4,271.7 462.1,273.4 456.4,272.8 450.8,272.8 446.5,271.9 441.7,271.4 438.2,277.5 M438.2,277.5 436.0,275.7 434.3,274.9 430.8,272.8 428.6,267.8 M428.6,267.8 422.3,269.9 418.0,272.8 415.2,274.6 412.6,277.2 412.4,281.3 M412.4,281.3 408.1,281.8 405.2,281.8 M405.2,281.8 403.8,278.6 401.0,276.0 395.6,275.7 M395.6,275.7 393.9,272.2 393.3,268.4 M395.6,275.7 389.0,274.9 380.5,275.7 M389.0,274.9 388.7,277.5 385.3,279.5 M390.2,285.0 393.9,282.7 397.3,283.9 398.7,286.7 M398.7,286.7 401.5,289.6 403.8,289.3 M398.7,286.7 395.3,291.3 M403.8,289.3 405.2,286.7 405.2,281.8 M403.8,289.3 406.7,294.5 406.7,298.5 M420.3,296.5 418.9,292.5 420.3,288.2 420.0,283.9 M412.4,281.3 416.6,283.0 420.0,283.9 420.0,279.5 427.7,279.2 M427.7,279.2 429.4,283.9 429.7,289.6 431.4,293.6 M430.3,279.5 432.6,285.3 432.6,293.3 M427.7,279.2 430.3,279.5 434.3,274.9 M438.2,277.5 438.5,282.4 435.7,288.2 435.7,292.8 M452.5,297.9 454.5,293.0 459.3,291.9 462.1,288.2 465.8,282.4 468.4,278.6 468.4,275.2 467.8,273.4 466.4,271.7 M467.8,273.4 470.7,276.6 470.7,280.1 472.1,282.4 467.8,283.0 472.1,289.6 M472.1,289.6 469.2,293.9 469.8,298.2 473.5,303.3 474.1,306.2 M474.1,306.2 465.8,304.7 460.1,304.7 455.9,304.5 M460.1,304.7 460.1,308.2 455.3,308.2 M465.8,304.7 469.0,307.0 467.5,311.0 469.2,313.8 469.0,316.7 464.4,316.7 463.6,319.5 459.9,321.8 M480.9,301.0 478.9,308.2 478.3,312.4 474.1,316.7 473.2,322.1 471.2,323.2 469.0,325.0 465.0,324.1 462.7,327.2 M474.1,306.2 474.9,301.6 480.9,301.0 M480.9,301.0 483.5,296.5 492.0,299.3 497.7,296.8 505.9,296.5 M472.1,289.6 476.4,289.0 482.0,285.3 487.7,283.9 492.0,279.5 493.1,278.6 M493.1,278.6 495.4,286.2 499.7,289.6 505.9,296.5 M496.3,254.4 496.3,265.8 492.0,270.8 490.6,274.6 493.1,278.6 M495.4,286.2 499.1,281.5 507.6,283.9 513.3,282.4 520.4,276.6 522.4,281.0 524.7,283.9 M524.7,283.9 525.6,280.1 528.1,276.6 531.0,272.2 531.8,269.9 M531.8,269.9 533.2,261.9 537.5,258.9 M531.8,269.9 536.1,269.0 541.8,269.3 548.6,275.2 M548.6,275.2 546.9,279.5 550.0,279.8 550.9,278.1 M550.0,279.8 553.2,285.3 561.7,288.2 564.5,288.2 556.0,296.8 547.5,299.0 544.6,299.9 M544.6,299.9 540.4,301.0 536.1,300.8 530.4,298.5 527.6,295.9 M527.6,295.9 524.7,292.5 521.9,288.2 524.7,283.9 M544.6,299.9 544.6,313.8 546.3,315.8 M527.6,295.9 524.7,299.0 526.1,301.9 527.6,306.2 525.3,309.6 524.7,313.8 M524.7,313.8 535.2,319.5 539.5,324.4 M524.7,299.0 519.0,301.0 515.6,301.0 M515.6,301.0 517.0,304.7 513.3,308.7 512.5,312.4 512.2,315.0 M505.9,296.5 510.5,298.5 515.6,301.0 M514.8,313.8 524.7,313.8 M512.2,315.0 514.8,313.8 515.6,317.5 514.8,321.0 512.8,323.5 M512.2,315.0 511.1,318.4 511.3,320.7 M511.1,318.4 515.6,317.5 M516.7,335.6 521.3,337.6 524.7,338.1 M526.4,343.9 530.4,344.5 536.1,343.4 542.9,341.0 M516.7,335.6 510.2,335.3 508.8,337.6 509.4,342.5 510.5,346.5 512.8,346.0 512.8,349.5 509.1,347.7 506.2,346.0 502.0,345.1 500.0,343.1 497.4,343.6 496.3,342.2 M496.3,342.2 491.1,343.1 490.6,339.0 490.0,331.8 483.5,331.0 482.0,333.8 477.8,334.1 475.2,327.8 465.0,327.8 463.0,328.1 M496.3,342.2 496.3,348.3 490.6,348.3 490.6,357.7 494.6,361.9 M461.6,360.7 466.4,361.3 480.6,361.3 487.7,362.8 494.6,361.9 499.7,362.5 M487.7,364.0 487.7,375.2 484.9,375.2 484.9,383.9 484.9,395.3 482.0,396.9 477.8,396.3 474.9,396.0 M487.7,364.0 494.6,363.1 499.7,362.5 M484.9,383.9 486.9,390.2 490.6,388.6 493.4,385.4 500.5,386.4 504.5,382.3 507.6,377.6 511.6,375.8 M499.7,362.5 502.0,368.2 506.2,370.6 511.6,375.8 517.0,376.4 M517.0,376.4 520.4,372.1 521.9,368.5 521.3,363.1 521.9,359.2 517.6,357.7 514.5,355.9 M499.7,362.5 504.8,363.1 509.9,358.6 514.5,355.9 M514.5,355.9 513.9,353.6 522.4,351.2 M522.4,351.2 521.3,349.8 523.3,346.3 522.7,341.9 521.3,337.6 M522.4,351.2 526.1,352.7 529.8,357.1 528.1,360.1 526.1,357.7 525.6,354.2 526.4,352.1 M517.0,376.4 519.0,382.9 519.0,387.3 521.6,390.2 M516.2,387.6 519.0,387.6 519.0,391.5 516.2,391.5 516.2,387.6 M504.8,399.2 507.6,396.3 511.3,397.9 511.3,401.2 507.6,402.5 505.4,401.2 504.8,399.2 M403.0,179.5 405.0,179.1 409.5,180.3 408.4,185.5 407.2,188.5 408.1,193.3 407.0,196.9 M422.9,173.7 430.0,176.4 436.8,177.6 M449.3,172.1 447.9,167.4 447.9,163.7 445.4,162.1 449.6,156.7 451.3,150.7 446.2,148.5 439.9,146.3 435.1,141.4 M437.7,140.0 445.1,141.8 447.9,134.9 448.5,131.1 M445.1,141.8 446.2,148.5 M452.5,123.4 455.9,123.9 M468.4,128.3 469.8,137.2 470.7,141.8 462.7,145.0 467.3,151.5 465.0,156.7 455.3,157.1 449.6,156.7 M447.9,163.7 453.6,163.3 457.6,160.8 467.0,161.2 467.0,164.5 M455.3,157.1 457.6,160.8 M470.7,141.8 475.8,145.0 481.5,148.5 492.3,150.2 M467.3,151.5 476.1,152.4 481.5,148.5 M476.1,152.4 474.9,159.2 473.8,160.0 467.0,161.2 M476.9,155.0 481.5,155.8 486.3,152.8 491.1,153.3 M492.3,150.2 496.3,142.7 495.1,137.2 496.0,128.3 494.8,127.8 492.9,125.8 484.0,125.8 M494.8,127.8 500.5,126.8 503.7,119.4 M487.7,117.4 496.3,116.3 503.7,119.4 508.2,116.8 505.9,110.1 M497.4,108.0 505.9,110.1 505.9,103.1 507.6,99.2 M508.2,116.8 515.9,119.9 517.6,128.3 521.0,130.7 518.5,136.8 M495.1,139.1 502.0,137.7 509.1,139.5 514.8,140.0 518.5,136.8 M518.5,136.8 524.7,135.9 529.0,144.1 536.1,146.3 541.8,148.0 541.2,155.0 536.9,158.8 M492.3,150.2 491.1,153.3 493.1,155.0 497.7,155.4 503.7,153.7 507.6,153.3 511.1,155.0 513.3,161.2 508.2,165.3 M503.7,153.7 508.2,163.3 508.2,165.3 512.5,166.6 M493.1,155.0 487.7,162.5 485.7,162.9 M485.7,162.9 481.5,163.7 474.9,161.2 473.8,160.0 M485.7,162.9 488.9,167.8 492.0,169.0 492.6,170.6 M492.6,170.6 499.1,172.5 504.8,171.0 509.4,172.5 M492.6,170.6 491.7,176.0 491.7,178.0 493.4,181.8 M493.4,181.8 497.7,181.0 502.2,181.4 503.1,180.3 507.6,179.1 M503.1,180.3 502.0,183.3 M484.9,187.8 487.7,183.7 493.4,181.8 M483.2,179.5 486.3,179.1 486.6,182.9 487.7,183.7 M486.3,179.1 489.2,178.0 491.7,178.0 M480.6,177.2 482.6,173.3 482.0,167.8 472.9,166.6 467.0,165.3 M482.0,167.8 483.2,166.6 481.5,163.7 M482.6,173.3 485.7,175.3 486.3,179.1 M474.9,161.2 472.4,162.5 471.5,165.3 467.0,165.3 M482.0,167.8 473.5,166.6 472.9,168.6 478.1,175.3 M459.9,102.0 463.0,96.4 463.0,87.6 462.4,76.6 467.8,68.8 469.2,58.6 474.4,47.8 479.5,40.2 486.3,36.3 M486.3,36.3 494.8,45.6 495.7,55.1 496.8,60.0 M486.3,36.3 500.5,36.3 507.6,28.2 510.5,33.1 515.6,30.6 M510.5,33.1 509.1,40.2 513.3,47.8 510.5,52.9 513.3,62.1 512.8,68.8 517.6,79.1 513.3,85.8 507.1,93.5 M568.8,162.5 564.5,155.8 561.7,153.7 561.1,149.4 566.0,146.3 573.1,139.5 578.8,140.5 584.4,143.2 593.0,141.8 601.5,142.7 602.9,137.2 601.5,130.2 610.0,126.3 621.4,122.9 630.0,126.8 637.1,128.8 645.6,126.8 648.4,131.6 655.6,142.7 664.1,141.8 671.2,148.0 676.3,150.2 677.7,149.8 M676.3,150.2 671.2,159.2 662.7,166.1 657.0,168.2 656.1,178.4 M656.1,178.4 647.0,175.7 638.5,174.5 630.0,177.2 628.5,179.1 M628.5,179.1 621.4,182.9 617.2,182.2 615.7,175.3 601.5,170.2 594.4,165.3 587.3,167.4 587.3,181.8 M587.3,181.8 583.0,179.1 577.3,179.9 M587.3,181.8 594.4,177.2 598.7,181.0 604.4,186.7 611.5,191.1 617.2,196.1 M581.3,196.5 587.3,194.0 593.0,195.1 598.7,198.6 602.1,199.0 602.1,202.5 M602.1,202.5 607.2,202.9 611.5,199.3 617.2,196.1 621.4,197.2 627.1,195.4 631.4,197.6 631.4,192.9 632.8,198.3 641.0,196.9 M621.4,197.2 622.8,192.2 621.4,186.7 628.5,183.3 628.5,179.1 M656.1,178.4 649.9,182.5 644.2,185.2 637.9,188.5 641.0,196.9 M637.9,188.5 630.0,188.5 628.5,183.3 632.8,185.2 636.5,183.7 M641.0,196.9 631.4,201.1 630.0,208.1 625.7,211.5 625.1,215.2 617.2,218.2 616.6,221.8 605.8,223.4 601.2,222.1 M602.1,202.5 600.4,208.1 600.9,214.8 603.8,218.2 601.2,222.1 607.2,230.5 603.2,236.9 M622.0,241.6 630.0,239.1 627.1,232.8 632.2,228.0 637.1,221.8 639.9,218.2 639.9,213.2 638.5,208.1 638.5,205.6 647.0,203.6 649.3,202.9 M641.0,196.9 649.3,202.9 652.7,207.0 652.7,213.2 651.9,217.2 658.4,220.8 M658.4,220.8 665.5,224.1 672.6,228.0 678.6,228.3 M658.4,220.8 655.8,225.4 661.2,228.3 666.9,229.9 672.6,232.5 678.6,233.1 678.6,228.3 M678.6,228.3 680.6,230.2 684.0,227.3 688.8,228.6 689.7,231.8 683.4,232.1 680.6,230.2 M688.8,228.6 695.4,224.7 701.1,223.4 704.8,227.3 M678.6,233.1 680.6,235.9 678.6,239.1 681.2,246.2 M680.6,235.9 683.4,234.4 683.4,236.6 690.5,237.5 687.4,240.6 690.5,243.7 691.4,249.0 M704.8,227.3 698.8,232.8 697.1,237.5 693.4,240.6 693.4,246.2 691.4,249.0 M704.8,227.3 708.7,229.6 708.2,235.0 705.6,239.4 709.6,246.2 715.9,248.7 712.7,252.0 M712.7,252.0 706.8,254.1 706.2,260.4 708.5,264.3 707.3,267.8 710.2,273.7 711.3,277.2 709.0,281.8 M712.7,252.0 715.3,254.4 715.9,259.5 718.1,258.3 723.8,258.0 726.1,263.4 728.4,269.6 M728.4,269.6 721.0,269.9 719.3,272.2 720.7,277.5 M728.4,269.6 733.8,268.7 733.8,264.9 729.5,260.4 725.2,255.9 723.8,252.0 721.0,250.5 718.7,245.6 715.9,248.7 M718.7,245.6 723.8,244.7 728.1,243.1 731.5,246.2 735.2,248.4 M733.8,268.7 733.8,275.5 729.5,277.5 728.9,279.5 725.2,281.3 M713.0,292.5 715.6,294.8 718.4,293.3 M739.8,305.3 742.3,308.4 746.6,307.3 751.4,307.3 755.1,303.9 757.1,299.0 762.5,299.0 M829.1,318.4 829.1,337.0 M677.7,149.8 684.0,155.8 686.8,166.1 699.6,170.6 702.5,176.4 715.3,176.8 726.7,180.3 739.5,177.6 746.3,172.5 746.3,167.4 755.1,165.7 760.8,161.2 768.8,160.4 763.6,155.0 758.0,155.4 756.5,154.1 759.9,147.2 M677.7,149.8 682.6,146.3 689.7,143.2 698.2,146.3 706.8,144.1 707.6,137.2 711.0,138.2 718.7,140.5 719.0,144.1 729.5,145.0 735.2,148.9 743.7,149.4 752.3,145.4 759.9,147.2 M759.9,147.2 763.6,148.0 768.8,144.5 769.3,134.5 772.2,131.1 779.6,130.2 786.4,134.9 790.7,146.3 797.8,151.5 800.6,156.2 806.3,155.0 812.0,153.3 807.7,165.3 801.5,167.8 800.6,175.3 799.5,177.6 M799.5,177.6 797.2,175.3 792.1,179.1 788.7,180.3 781.8,186.7 M787.0,194.7 793.2,191.8 M541.8,173.7 550.3,175.3 556.0,177.2 560.3,179.9 566.2,179.9 M546.3,181.0 551.7,182.5 552.3,186.3 555.4,187.8 554.0,192.5 555.4,196.9 M551.7,182.5 556.0,181.8 560.3,179.9 M556.0,181.8 558.8,185.9 560.3,190.7 M555.4,187.8 560.3,190.7 564.5,188.1 567.1,192.5 M555.4,196.9 548.6,197.2 541.8,198.3 536.1,198.3 532.4,198.6 531.0,201.1 530.4,201.5 M548.6,197.2 545.2,205.3 538.4,210.1 539.5,214.2 M555.4,196.9 558.8,201.8 557.4,206.3 558.8,211.5 564.0,215.5 564.5,219.8 566.0,221.5 M539.5,214.2 547.5,217.8 555.1,224.1 560.3,224.4 563.7,226.4 565.7,226.4 M560.3,224.4 563.1,221.5 564.5,221.5 M539.5,214.2 533.2,216.5 536.1,219.8 531.8,223.1 527.6,223.4 M538.4,210.1 532.7,213.8 529.5,212.5 529.0,216.5 527.6,223.1 M525.6,217.2 527.3,223.1 M527.8,211.1 529.8,210.1 532.1,207.0 530.4,206.0 M549.5,263.7 551.2,260.7 556.0,261.0 561.7,261.9 567.4,257.1 575.9,255.9 584.4,252.9 586.4,246.8 585.0,244.7 577.6,244.1 574.8,240.0 M586.4,246.8 587.3,240.6 588.4,237.8 M575.9,255.9 579.0,262.8 M572.5,238.5 574.2,238.8"/>

</g>
<g id="wlc">
<text class="cl" x="132.2" y="128.1">Canada</text>
<text class="cl" x="139.0" y="191.2">United States</text>
<text class="cl" x="136.5" y="244.2">Mexico</text>
<text class="cl" x="374.5" y="76.2">Iceland</text>
<text class="cl" x="476.0" y="72.0">Sweden</text>
<text class="cl" x="451.4" y="94.0">Norway</text>
<text class="cl" x="502.0" y="53.2">Finland</text>
<text class="cl" x="456.7" y="152.6">Germany</text>
<text class="cl" x="435.6" y="166.4">France</text>
<text class="cl" x="418.4" y="183.4">Spain</text>
<text class="cl" x="519.8" y="151.1">Ukraine</text>
<text class="cl" x="528.5" y="191.2">Turkey</text>
<text class="cl" x="621.6" y="157.4">Kazakhstan</text>
<text class="cl" x="621.2" y="210.4">Afghanistan</text>
<text class="cl" x="486.5" y="132.8">Poland</text>
<text class="cl" x="416.4" y="115.8">United</text>
<text class="cl" x="418.0" y="125.8">Kingdom</text>
<text class="cl" x="461.0" y="178.2">Italy</text>
<text class="cl" x="548.6" y="214.7">Iraq</text>
<text class="cl" x="582.0" y="217.6">Iran</text>
<text class="cl" x="694.3" y="87.0">Russia</text>
<text class="cl" x="721.6" y="163.4">Mongolia</text>
<text class="cl" x="722.8" y="199.2">China</text>
<text class="cl" x="789.0" y="203.2">South Korea</text>
<text class="cl" x="827.5" y="193.2">Japan</text>
<text class="cl" x="432.6" y="231.2">Algeria</text>
<text class="cl" x="477.5" y="234.2">Libya</text>
<text class="cl" x="514.7" y="230.2">Egypt</text>
<text class="cl" x="556.6" y="244.0">Saudi Arabia</text>
<text class="cl" x="623.7" y="228.2">Pakistan</text>
<text class="cl" x="654.5" y="247.2">India</text>
<text class="cl" x="422.6" y="263.0">Mali</text>
<text class="cl" x="456.4" y="263.0">Niger</text>
<text class="cl" x="483.0" y="274.2">Chad</text>
<text class="cl" x="514.8" y="265.0">Sudan</text>
<text class="cl" x="451.2" y="287.6">Nigeria</text>
<text class="cl" x="541.3" y="289.6">Ethiopia</text>
<text class="cl" x="535.3" y="313.1">Kenya</text>
<text class="cl" x="493.0" y="319.4">DR Congo</text>
<text class="cl" x="533.5" y="332.4">Tanzania</text>
<text class="cl" x="474.7" y="350.4">Angola</text>
<text class="cl" x="472.7" y="369.9">Namibia</text>
<text class="cl" x="564.3" y="376.2">Madagascar</text>
<text class="cl" x="498.0" y="383.2">Botswana</text>
<text class="cl" x="483.7" y="415.2">South Africa</text>
<text class="cl" x="716.0" y="256.5">Thailand</text>
<text class="cl" x="757.9" y="326.4">Indonesia</text>
<text class="cl" x="846.7" y="328.1">Papua New</text>
<text class="cl" x="846.7" y="335.9">Guinea</text>
<text class="cl" x="810.0" y="387.8">Australia</text>
<text class="cl" x="901.8" y="435.0">New</text>
<text class="cl" x="901.3" y="443.8">Zealand</text>
<text class="cl" x="239.9" y="291.3">Venezuela</text>
<text class="cl" x="211.6" y="303.3">Colombia</text>
<text class="cl" x="269.7" y="338.4">Brazil</text>
<text class="cl" x="211.6" y="346.0">Peru</text>
<text class="cl" x="244.1" y="362.4">Bolivia</text>
<text class="cl" x="227.8" y="393.2">Chile</text>
<text class="cl" x="251.1" y="435.3">Argentina</text>
</g><g id="wlo">
<text class="ol" x="312.7" y="196.4">North</text>
<text class="ol" x="312.7" y="210.2">Atlantic</text>
<text class="ol" x="312.7" y="223.7">Ocean</text>
<text class="ol" x="39.8" y="389.2">South</text>
<text class="ol" x="39.0" y="403.0">Pacific</text>
<text class="ol" x="39.0" y="416.5">Ocean</text>
<text class="ol" x="388.0" y="387.2">South</text>
<text class="ol" x="387.3" y="401.2">Atlantic</text>
<text class="ol" x="387.3" y="414.7">Ocean</text>
<text class="ol" x="485.7" y="533.5">Southern</text>
<text class="ol" x="485.7" y="546.2">Ocean</text>
<text class="ol" x="988.7" y="579.3">Southern</text>
<text class="ol" x="988.7" y="592.3">Ocean</text>
<text class="ol" x="675.0" y="373.2">Indian</text>
<text class="ol" x="675.0" y="386.2">Ocean</text>
<text class="ol" x="979.2" y="190.7">North</text>
<text class="ol" x="979.2" y="204.4">Pacific</text>
<text class="ol" x="979.0" y="217.2">Ocean</text>
<text x="493" y="659.500" style="font:10.500px 'Liberation Sans',sans-serif;letter-spacing:2.100px;fill:#111;stroke:#111;stroke-width:.25;text-anchor:middle">ANTARCTICA</text>
</g>
<clipPath id="lc"><use href="#landp"/><use href="#landp" x="1024"/><use href="#landp" x="-1024"/></clipPath>
</defs>
<rect x="0" y="0" width="1366" height="657" fill="#a5afb4"/>
<use href="#world"/><use href="#world" x="1024"/><use href="#world" x="-1024"/>
<path class="dl" d="M0,311H1366"/>
<g clip-path="url(#lc)"><path d="M0,311H1366" stroke="#f4f5f7" stroke-width="3"/><path class="dl" d="M0,311H1366" style="stroke:#dcd2d4"/></g>
<path d="M971.200,50V61Q940,93 911.300,132.100L939.800,153.500M940,324L961.500,351.500M961.500,452.500L940,479" fill="none" stroke="#6f5d63" stroke-width=".9" stroke-dasharray="5 1.500 1.500 1.500"/>
<path class="dl" d="M939.800,153.500V324M961.500,351.500V452.500M940,479V657" style="stroke-width:1.500;stroke:#a07880"/>
<g class="halo"><use href="#wlc"/><use href="#wlc" x="1024"/><use href="#wlc" x="-1024"/></g>
<g class="ink"><use href="#wlc"/><use href="#wlc" x="1024"/><use href="#wlc" x="-1024"/></g>
<use href="#wlo"/><use href="#wlo" x="1024"/><use href="#wlo" x="-1024"/>
<defs><g id="co"><path d="M10.70,-11.08A15.40,15.40 0 0 0 -10.70,-11.08 M-14.94,-3.73A15.40,15.40 0 0 0 -4.24,14.80 M4.24,14.80A15.40,15.40 0 0 0 14.94,-3.73" fill="none" stroke="#f89a25" stroke-width="3.2" opacity="0.62"/><path d="M13.55,-14.03A19.50,19.50 0 0 0 -13.55,-14.03 M-18.92,-4.72A19.50,19.50 0 0 0 -5.37,18.74 M5.37,18.74A19.50,19.50 0 0 0 18.92,-4.72" fill="none" stroke="#f89a25" stroke-width="3.2" opacity="0.36"/><path d="M16.39,-16.98A23.60,23.60 0 0 0 -16.39,-16.98 M-22.90,-5.71A23.60,23.60 0 0 0 -6.51,22.69 M6.51,22.69A23.60,23.60 0 0 0 22.90,-5.71" fill="none" stroke="#f89a25" stroke-width="3.2" opacity="0.17"/><circle r="12.7" fill="#f89a25"/></g><g id="ct"><path d="M10.70,-11.08A15.40,15.40 0 0 0 -10.70,-11.08 M-14.94,-3.73A15.40,15.40 0 0 0 -4.24,14.80 M4.24,14.80A15.40,15.40 0 0 0 14.94,-3.73" fill="none" stroke="#0e987c" stroke-width="3.2" opacity="0.62"/><path d="M13.55,-14.03A19.50,19.50 0 0 0 -13.55,-14.03 M-18.92,-4.72A19.50,19.50 0 0 0 -5.37,18.74 M5.37,18.74A19.50,19.50 0 0 0 18.92,-4.72" fill="none" stroke="#0e987c" stroke-width="3.2" opacity="0.36"/><path d="M16.39,-16.98A23.60,23.60 0 0 0 -16.39,-16.98 M-22.90,-5.71A23.60,23.60 0 0 0 -6.51,22.69 M6.51,22.69A23.60,23.60 0 0 0 22.90,-5.71" fill="none" stroke="#0e987c" stroke-width="3.2" opacity="0.17"/><circle r="12.7" fill="#0e987c"/></g><g id="pw"><path d="M0,0L-11.85,-18.85A14.00,14.00 0 1 1 11.85,-18.85Z M0,-26.30m-5.6,0a5.6,5.6 0 1 0 11.2,0a5.6,5.6 0 1 0 -11.2,0Z" fill="#e9eaeb" fill-rule="evenodd" stroke="none"/><path d="M0,0L-11.85,-18.85A14.00,14.00 0 1 1 11.85,-18.85Z" fill="none" stroke="#10204f" stroke-width="1.7" stroke-linejoin="round"/><circle cy="-26.30" r="5.9" fill="none" stroke="#10204f" stroke-width="1.7"/></g><g id="pt"><path d="M0,0L-11.85,-18.85A14.00,14.00 0 1 1 11.85,-18.85Z M0,-26.30m-5.6,0a5.6,5.6 0 1 0 11.2,0a5.6,5.6 0 1 0 -11.2,0Z" fill="#00c8b2" fill-rule="evenodd"/><path d="M0,0L-11.85,-18.85A14.00,14.00 0 1 1 11.85,-18.85Z" fill="none" stroke="#4d4d4d" stroke-width="1.9" stroke-linejoin="round"/><circle cy="-26.30" r="5.9" fill="none" stroke="#4d4d4d" stroke-width="1.9"/></g><g id="pg"><path d="M0,0L-11.85,-18.85A14.00,14.00 0 1 1 11.85,-18.85Z M0,-26.30m-5.6,0a5.6,5.6 0 1 0 11.2,0a5.6,5.6 0 1 0 -11.2,0Z" fill="#5dc86f" fill-rule="evenodd"/><path d="M0,0L-11.85,-18.85A14.00,14.00 0 1 1 11.85,-18.85Z" fill="none" stroke="#2a3342" stroke-width="1.9" stroke-linejoin="round"/><circle cy="-26.30" r="5.9" fill="none" stroke="#2a3342" stroke-width="1.9"/></g></defs>
<use href="#co" x="178.3" y="174.7"/><text class="cn" x="178.3" y="178.7">22</text>
<use href="#co" x="217.8" y="165.2"/><text class="cn" x="217.8" y="169.2">56</text>
<use href="#ct" x="188.5" y="208.2"/><text class="cn" x="188.5" y="212.2">8</text>
<use href="#co" x="479.2" y="100.1"/><text class="cn" x="479.2" y="104.1">16</text>
<use href="#co" x="442.2" y="135.1"/><text class="cn" x="442.2" y="139.1">35</text>
<use href="#co" x="488.5" y="135.9"/><text class="cn" x="488.5" y="139.9">14</text>
<use href="#ct" x="486.5" y="167.7"/><text class="cn" x="486.5" y="171.7">8</text>
<use href="#co" x="455.2" y="170.2"/><text class="cn" x="455.2" y="174.2">20</text>
<use href="#ct" x="402.1" y="191.0"/><text class="cn" x="402.1" y="195.0">4</text>
<use href="#ct" x="528.0" y="215.3"/><text class="cn" x="528.0" y="219.3">3</text>
<use href="#ct" x="759.9" y="187.2"/><text class="cn" x="759.9" y="191.2">2</text>
<use href="#ct" x="774.1" y="217.8"/><text class="cn" x="774.1" y="221.8">2</text>
<use href="#ct" x="813.9" y="206.3"/><text class="cn" x="813.9" y="210.3">5</text>
<use href="#co" x="753.5" y="245.6"/><text class="cn" x="753.5" y="249.6">19</text>
<use href="#co" x="723.3" y="307.1"/><text class="cn" x="723.3" y="311.1">13</text>
<use href="#ct" x="756.1" y="334.9"/><text class="cn" x="756.1" y="338.9">2</text>
<use href="#ct" x="864.3" y="396.0"/><text class="cn" x="864.3" y="400.0">9</text>
<use href="#ct" x="841.0" y="426.8"/><text class="cn" x="841.0" y="430.8">9</text>
<use href="#ct" x="1135.9" y="114.3"/><text class="cn" x="1135.9" y="118.3">5</text>
<use href="#ct" x="1154.7" y="144.4"/><text class="cn" x="1154.7" y="148.4">3</text>
<use href="#co" x="1102.1" y="149.4"/><text class="cn" x="1102.1" y="153.4">24</text>
<use href="#co" x="1124.2" y="200.2"/><text class="cn" x="1124.2" y="204.2">32</text>
<use href="#co" x="1181.2" y="222.0"/><text class="cn" x="1181.2" y="226.0">10</text>
<use href="#ct" x="1173.5" y="256.1"/><text class="cn" x="1173.5" y="260.1">2</text>
<use href="#ct" x="295.8" y="380.1"/><text class="cn" x="295.8" y="384.1">2</text>
<use href="#pw" x="416.0" y="137.5"/>
<use href="#pt" x="646.2" y="183.0"/>
<use href="#pt" x="575.1" y="237.0"/>
<use href="#pg" x="719.9" y="278.6"/>
<use href="#pt" x="514.0" y="394.8"/>
<use href="#pt" x="931.1" y="431.0"/>
<use href="#pw" x="1009.1" y="256.0"/>
<use href="#pw" x="270.2" y="391.6"/>
<use href="#pw" x="267.9" y="422.6"/>
</svg>
<div id="nav">
<svg style="position:absolute;left:112px;top:9px" width="40" height="32" viewBox="0 0 40 32"><path d="M1.2,10.200C1.500,6 4,3.500 5.600,1.100C7.500,3.500 10,4.600 12.600,4.600C15.500,4.600 18.500,3.500 20,1.400C21.500,3.500 24.500,4.600 27.300,4.600C30,4.600 32.500,3.500 34.400,1.100C36,3.500 38.500,6 38.800,10.200Z" fill="#ee3f46"/><path d="M1.100,10.700H38.900C38.900,16 37,21 33,24.500C29,28 24,30 20,30.800C16,30 11,28 7,24.500C3,21 1.100,16 1.100,10.700Z" fill="#3465b4"/><text x="20.600" y="23.200" text-anchor="middle" font-family="Liberation Sans,sans-serif" font-weight="bold" font-size="12" fill="#fff">BTC</text></svg>
<div class="brand">Coin ATM Radar</div>
<div class="cnt">334 ATMs</div>
<div class="it" style="left:420px">Producer<span class="caret"></span></div>
<div class="it" style="left:523px">Country<span class="caret"></span></div>
<div class="it" style="left:619px"><span style="font-size:14.200px">Resources</span><span class="caret"></span></div>
<div class="it" style="left:732px"><svg width="10" height="14" viewBox="0 0 10 14" style="vertical-align:-1px;margin-right:7px"><path d="M5,0C2.200,0 0,2.100 0,4.800C0,7.500 3.200,11 5,14C6.800,11 10,7.500 10,4.800C10,2.100 7.800,0 5,0ZM5,2.700A2.100,2.100 0 1 1 5,6.900A2.100,2.100 0 1 1 5,2.700Z" fill="#555" fill-rule="evenodd"/></svg>Report ATM</div>
<div class="it" style="left:857px"><svg width="11" height="15" viewBox="0 0 11 15" style="vertical-align:-2px;margin-right:7px"><path d="M1,2H6.500C8.800,2 10,3.200 10,4.900C10,6.200 9.300,7 8.300,7.300C9.700,7.600 10.600,8.600 10.600,10C10.600,12 9.200,13 6.800,13H1ZM3.500,4V6.500H6C7,6.500 7.500,6 7.500,5.200C7.500,4.400 7,4 6,4ZM3.500,8.400V11H6.300C7.400,11 8,10.600 8,9.700C8,8.800 7.400,8.400 6.300,8.400Z M3.200,0H4.600V2.500H3.200Z M6,0H7.400V2.500H6Z M3.200,12.500H4.600V15H3.200Z M6,12.500H7.400V15H6Z" fill="#555" fill-rule="evenodd"/></svg>Donate<span class="caret"></span></div>
</div>
<!-- google controls -->
<div style="position:absolute;left:19px;top:69px;width:50px;height:50px;border-radius:25px;background:#fff;box-shadow:0 1px 4px rgba(0,0,0,.4)"><svg width="50" height="50" viewBox="0 0 50 50"><path d="M19.300,13.500L25,7.500L30.700,13.500 M19.300,36.500L25,42.500L30.700,36.500 M13.500,19.300L7.500,25L13.500,30.700 M36.500,19.300L42.500,25L36.500,30.700" fill="none" stroke="#6b6b6b" stroke-width="2.600"/></svg></div>
<div class="gm" style="left:35.500px;top:141.500px;width:17px;height:34px"><svg width="17" height="34" viewBox="0 0 17 34"><path d="M3,14.700Q3,13.400 4.500,13.400H12.500Q14,13.400 14,14.700L13.400,22.600H11.900L11.500,30.800H5.500L5.100,22.600H3.600Z" fill="#fbb52c" stroke="#e0941c" stroke-width=".6"/><path d="M5.300,13.400H11.700L8.500,17.800Z" fill="#e9604d"/><circle cx="8.500" cy="9" r="4" fill="#f9a825" stroke="#d98c1c" stroke-width=".7"/></svg></div>
<div class="gm" style="left:35.500px;top:188.500px;width:17px;height:15px"><svg width="17" height="15" viewBox="0 0 17 15"><path d="M4.500,7.500H12.500M8.500,3.500V11.500" stroke="#666" stroke-width="1.400"/></svg></div>
<div style="position:absolute;left:42px;top:203.500px;width:2.500px;height:180px;background:#fff;border-left:1px solid #9a9a9a;border-right:1px solid #9a9a9a;box-sizing:content-box;margin-left:-.5px"></div>
<div class="gm" style="left:35.500px;top:357.500px;width:17px;height:7.500px"><div style="position:absolute;left:4px;right:4px;top:3.200px;height:1px;background:#777"></div></div>
<div class="gm" style="left:35.500px;top:383.500px;width:17px;height:16px"><div style="position:absolute;left:4.500px;right:4.500px;top:7.300px;height:1.400px;background:#666"></div></div>
<div class="gm" style="left:1273px;top:56px;width:34px;height:18px;font-size:11px;-webkit-text-stroke:.35px #000;color:#000;text-align:center;line-height:18px;border-radius:2px 0 0 2px">Map</div>
<div class="gm" style="left:1308px;top:56px;width:52px;height:18px;font-size:11.400px;color:#565656;text-align:center;line-height:18px;border-radius:0 2px 2px 0">Satellite</div>
<div id="panel">
<div class="sb" style="left:15px;width:47px"><i><svg width="19" height="20" viewBox="0 0 19 20"><rect x="3.800" y="4" width="12" height="12" rx="2" fill="#3b5998"/><path d="M12.800,16V11.400H14.300L14.600,9.600H12.800V8.500C12.800,8 13,7.600 13.700,7.600H14.700V6C14.500,6 13.900,5.900 13.300,5.900C11.900,5.900 10.900,6.800 10.900,8.300V9.600H9.400V11.400H10.900V16Z" fill="#fff"/></svg></i><span>145</span></div>
<div class="sb" style="left:71px;width:47px"><i><svg width="19" height="20" viewBox="0 0 19 18" style="margin-top:0"><path d="M16.600,5C16.100,5.200 15.600,5.400 15,5.500C15.600,5.100 16,4.600 16.200,3.900C15.700,4.200 15.100,4.500 14.500,4.600C14,4 13.300,3.700 12.500,3.700C11,3.700 9.800,4.900 9.800,6.400C9.800,6.600 9.800,6.800 9.900,7C7.600,6.900 5.600,5.800 4.300,4.100C4,4.500 3.900,5 3.900,5.500C3.900,6.400 4.400,7.300 5.100,7.700C4.700,7.700 4.200,7.600 3.900,7.400C3.900,8.700 4.800,9.800 6.100,10.100C5.700,10.200 5.300,10.200 4.900,10.100C5.200,11.200 6.200,12 7.400,12C6.500,12.700 5.300,13.200 4,13.200C3.800,13.200 3.600,13.200 3.400,13.100C4.600,13.900 6,14.400 7.500,14.400C12.500,14.400 15.200,10.300 15.200,6.700V6.300C15.700,6 16.200,5.500 16.600,5Z" fill="#2daae1"/></svg></i><span>193</span></div>
<div class="sb" style="left:126px;width:41px"><i><svg width="19" height="20" viewBox="0 0 19 20"><text x="3.300" y="14.600" font-family="Liberation Serif,serif" font-weight="bold" font-size="15.500" fill="#dc4236">g</text><path d="M11.800,9.600H16M13.900,7.500V11.700" stroke="#dc4236" stroke-width="1.100"/></svg></i><span>23</span></div>
<svg style="position:absolute;left:190px;top:5px" width="34" height="30" viewBox="190 5 34 30"><path d="M207.100,12.600V18.800H213.300L211.300,16.800L215.900,12.100L213.900,10.100L209.200,14.700Z M205.600,27.200V21H199.400L201.400,23L196.800,27.700L198.800,29.700L203.500,25.100Z" fill="#333"/></svg>
<div class="ck" style="left:15px;top:46px"></div><div class="lb" style="left:31px;top:49px">Bitcoin</div>
<div class="ck" style="left:15px;top:68px"></div><div class="lb" style="left:31px;top:71px">Litecoin</div>
<div class="ck" style="left:15px;top:90px"></div><div class="lb" style="left:31px;top:93px">Dogecoin</div>
<div class="ck" style="left:15px;top:112px"></div><div class="lb" style="left:31px;top:115px">Blackcoin</div>
<div class="ck" style="left:95px;top:46px"></div><div class="lb" style="left:111px;top:48px">Fiat <b class="ar">→</b> Crypto</div>
<div class="ck" style="left:95px;top:68px"></div><div class="lb" style="left:111px;top:70px">Crypto <b class="ar">→</b> Fiat</div>
</div>
</body></html>
